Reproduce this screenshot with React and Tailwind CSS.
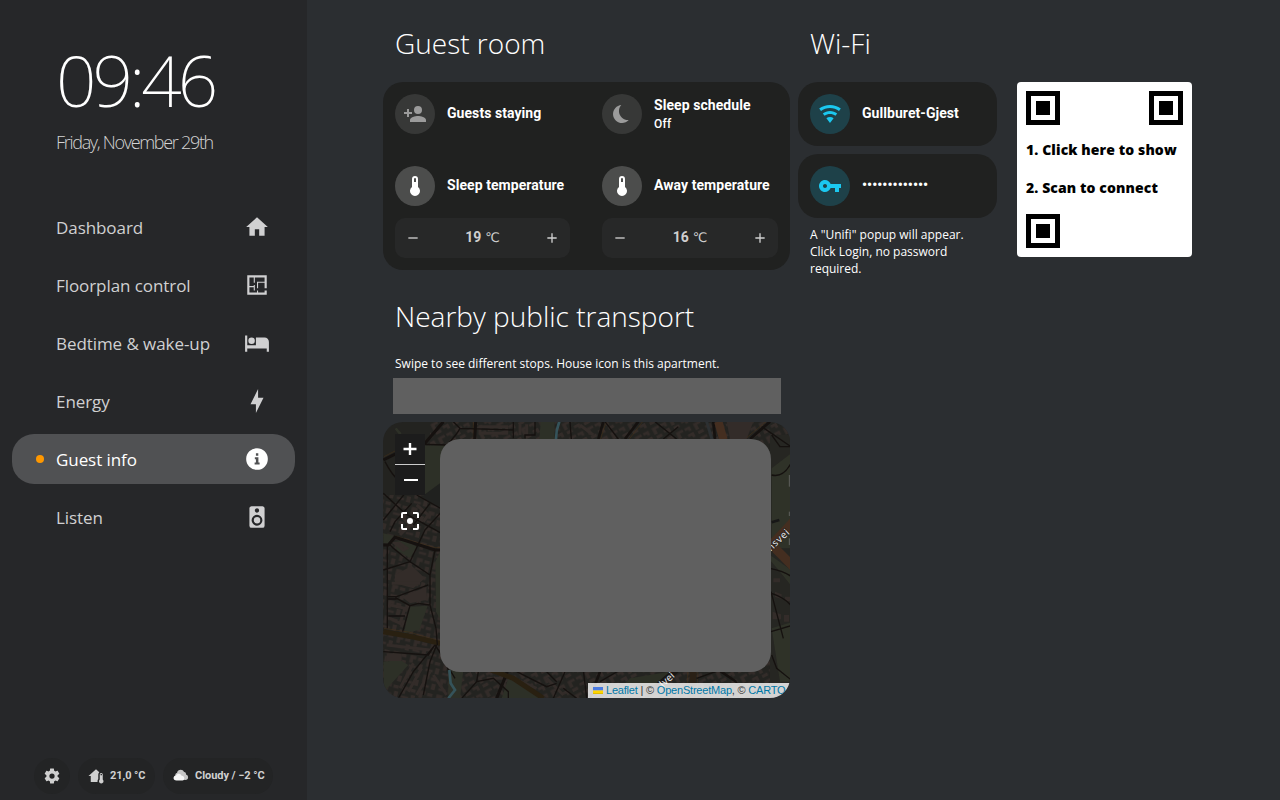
import React from "react";

const paths = {
  home: "M10,20V14H14V20H19V12H22L12,3L2,12H5V20H10Z",
  floor: "M10 5V10H9V5H5V13H9V12H10V17H9V14H5V19H12V17H13V19H19V17H21V21H3V3H21V15H19V10H13V15H12V9H19V5H10Z",
  bed: "M19,7H11V14H3V5H1V20H3V17H21V20H23V11A4,4 0 0,0 19,7M7,13A3,3 0 0,0 10,10A3,3 0 0,0 7,7A3,3 0 0,0 4,10A3,3 0 0,0 7,13Z",
  bolt: "M11 15H6L13 1V9H18L11 23V15Z",
  info: "M12 2A10 10 0 1 0 12 22A10 10 0 1 0 12 2ZM11 6.8H13.2V9H11ZM10 10.4H13.3V15.2H14.4V17H9.8V15.2H11V12.2H10Z",
  speaker: "M12,12A3,3 0 0,0 9,15A3,3 0 0,0 12,18A3,3 0 0,0 15,15A3,3 0 0,0 12,12M12,20A5,5 0 0,1 7,15A5,5 0 0,1 12,10A5,5 0 0,1 17,15A5,5 0 0,1 12,20M12,4A2,2 0 0,1 14,6A2,2 0 0,1 12,8C10.89,8 10,7.1 10,6C10,4.89 10.89,4 12,4M17,2H7C5.89,2 5,2.89 5,4V20A2,2 0 0,0 7,22H17A2,2 0 0,0 19,20V4C19,2.89 18.1,2 17,2Z",
  cog: "M12,15.5A3.5,3.5 0 0,1 8.5,12A3.5,3.5 0 0,1 12,8.5A3.5,3.5 0 0,1 15.5,12A3.5,3.5 0 0,1 12,15.5M19.43,12.97C19.47,12.65 19.5,12.33 19.5,12C19.5,11.67 19.47,11.34 19.43,11L21.54,9.37C21.73,9.22 21.78,8.95 21.66,8.73L19.66,5.27C19.54,5.05 19.27,4.96 19.05,5.05L16.56,6.05C16.04,5.66 15.5,5.32 14.87,5.07L14.5,2.42C14.46,2.18 14.25,2 14,2H10C9.75,2 9.54,2.18 9.5,2.42L9.13,5.07C8.5,5.32 7.96,5.66 7.44,6.05L4.95,5.05C4.73,4.96 4.46,5.05 4.34,5.27L2.34,8.73C2.21,8.95 2.27,9.22 2.46,9.37L4.57,11C4.53,11.34 4.5,11.67 4.5,12C4.5,12.33 4.53,12.65 4.57,12.97L2.46,14.63C2.27,14.78 2.21,15.05 2.34,15.27L4.34,18.73C4.46,18.95 4.73,19.03 4.95,18.95L7.44,17.94C7.96,18.34 8.5,18.68 9.13,18.93L9.5,21.58C9.54,21.82 9.75,22 10,22H14C14.25,22 14.46,21.82 14.5,21.58L14.87,18.93C15.5,18.67 16.04,18.34 16.56,17.94L19.05,18.95C19.27,19.03 19.54,18.95 19.66,18.73L21.66,15.27C21.78,15.05 21.73,14.78 21.54,14.63L19.43,12.97Z",
  guest: "M15,14C12.33,14 7,15.33 7,18V20H23V18C23,15.33 17.67,14 15,14M6,10V7H4V10H1V12H4V15H6V12H9V10M15,12A4,4 0 0,0 19,8A4,4 0 0,0 15,4A4,4 0 0,0 11,8A4,4 0 0,0 15,12Z",
  sleep: "M18.73,18C15.4,21.69 9.71,22 6,18.64C2.33,15.31 2.04,9.62 5.37,5.93C6.9,4.25 9,3.2 11.27,3C7.96,6.7 8.27,12.39 12,15.71C13.63,17.19 15.78,18 18,18C18.25,18 18.5,18 18.73,18Z",
  thermo: "M15 13V5A3 3 0 0 0 9 5V13A5 5 0 1 0 15 13M12 4A1 1 0 0 1 13 5V8H11V5A1 1 0 0 1 12 4Z",
  wifi: "M12,21L15.6,16.2C14.6,15.45 13.35,15 12,15C10.65,15 9.4,15.45 8.4,16.2L12,21M12,3C7.95,3 4.21,4.34 1.2,6.6L3,9C5.5,7.12 8.62,6 12,6C15.38,6 18.5,7.12 21,9L22.8,6.6C19.79,4.34 16.05,3 12,3M12,9C9.3,9 6.81,9.89 4.8,11.4L6.6,13.8C8.1,12.67 9.97,12 12,12C14.03,12 15.9,12.67 17.4,13.8L19.2,11.4C17.19,9.89 14.7,9 12,9Z",
  key: "M12.65 10C11.83 7.67 9.61 6 7 6c-3.31 0-6 2.69-6 6s2.69 6 6 6c2.61 0 4.83-1.67 5.65-4H17v4h4v-4h2v-4H12.65zM7 14c-1.1 0-2-.9-2-2s.9-2 2-2 2 .9 2 2-.9 2-2 2z",
  minus: "M19,13H5V11H19V13Z",
  plus: "M19,13H13V19H11V13H5V11H11V5H13V11H19V13Z",
  focus: "M12 9A3 3 0 1 0 12 15A3 3 0 1 0 12 9ZM19,19H15V21H19A2,2 0 0,0 21,19V15H19M19,3H15V5H19V9H21V5A2,2 0 0,0 19,3M5,5H9V3H5A2,2 0 0,0 3,5V9H5M5,15H3V19A2,2 0 0,0 5,21H9V19H5V15Z",
  homeThermo: "M19 8C20.11 8 21 8.9 21 10V16.76C21.61 17.31 22 18.11 22 19C22 20.66 20.66 22 19 22S16 20.66 16 19C16 18.11 16.39 17.31 17 16.76V10C17 8.9 17.9 8 19 8M19 9C18.45 9 18 9.45 18 10V11H20V10C20 9.45 19.55 9 19 9M12 3L16.4 6.96C15.54 7.69 15 8.78 15 10V16C14.37 16.83 14 17.87 14 19L14.1 20H5V12H2L12 3Z",
};

function Icon({ name, className }) {
  return (
    <svg viewBox="0 0 24 24" className={className} fill="currentColor" fillRule="evenodd" aria-hidden="true">
      <path d={paths[name]} />
    </svg>
  );
}

function NavItem({ icon, label, active }) {
  return (
    <a
      className={`flex h-[50px] items-center rounded-[22px] pr-[25px] pl-6 ${
        active ? "bg-[#505153] text-white" : "text-[#d0d0d1]"
      }`}
    >
      <span className={`h-2 w-2 rounded-full ${active ? "bg-[#ff9800]" : ""}`} />
      <span className="ml-3 flex-1 pt-px text-[17px] leading-6 tracking-[-0.07px]">{label}</span>
      <Icon name={icon} className="h-[26px] w-[26px]" />
    </a>
  );
}

function Entity({ icon, title, sub, iconClass }) {
  return (
    <div className="flex h-10 items-center gap-3">
      <span className={`flex h-10 w-10 shrink-0 items-center justify-center rounded-full ${iconClass}`}>
        <Icon name={icon} className="h-6 w-6" />
      </span>
      <span className={`flex flex-col font-['Roboto',sans-serif] text-white ${sub ? "" : "pb-[2px]"}`}>
        <span className="text-[14px] leading-[18px] font-bold tracking-[0.06px] whitespace-nowrap">{title}</span>
        {sub && <span className="pt-px text-[12px] leading-[18px] font-medium tracking-[0.2px]">{sub}</span>}
      </span>
    </div>
  );
}

function Stepper({ value }) {
  return (
    <div className="flex h-10 items-center justify-between rounded-[10px] bg-[#272828] px-[10px] text-[#cfcfcf]">
      <Icon name="minus" className="h-4 w-4" />
      <span className="flex items-baseline gap-[4px] pb-[2px] font-['Roboto',sans-serif] text-[14px] leading-5 font-bold">
        {value} <span className="font-['DejaVu_Sans',sans-serif] text-[13px] leading-5 font-normal">℃</span>
      </span>
      <Icon name="plus" className="h-4 w-4" />
    </div>
  );
}

function Heading({ children }) {
  return <h2 className="pl-3 text-[28px] leading-[40px] font-light text-white">{children}</h2>;
}

function Finder() {
  return (
    <span className="flex h-[34px] w-[34px] items-center justify-center border-[5px] border-black bg-white">
      <span className="h-[14px] w-[14px] bg-black" />
    </span>
  );
}

function MapArt() {
  return (
    <svg viewBox="0 0 407 276" className="block h-[276px] w-[407px]">
      <defs>
        <pattern id="blocks" width="58" height="46" patternUnits="userSpaceOnUse" patternTransform="rotate(-28)">
          <path d="M4 4h22v8h-12v14h-10zM32 5h18v14h-8v-6h-10zM6 31h18v9h-18zM33 26h19v15h-8v-7h-11z" fill="#332c29" />
        </pattern>
        <pattern id="blocksB" width="52" height="48" patternUnits="userSpaceOnUse" patternTransform="rotate(14)">
          <path d="M4 4h18v10h-8v12h-10zM28 6h16v10h-16zM5 32h22v8h-22zM34 24h12v18h-12z" fill="#332c29" />
        </pattern>
      </defs>
      <rect width="407" height="276" fill="#232320" />
      <g transform="translate(-3 -7) scale(.33333)">
        <path d="M150 0H1240V240H150z" fill="url(#blocks)" />
        <path d="M0 240H220V900H0z" fill="url(#blocksB)" />
        <path d="M210 700H1240V900H210z" fill="url(#blocks)" />
        <g fill="#2d3027">
          <path d="M125 92L205 90V205L140 238H130zM482 20H524V72H478zM50 38L65 55L58 60L44 42z" />
          <path d="M88 575L143 572L118 645L72 655zM166 440L185 400V620L168 590zM10 740L60 735L85 750L12 830zM205 765H250L240 850H205z" />
          <path d="M45 380L75 375L110 395L90 430L50 405zM385 790L440 800L480 850H365zM10 355L40 362L25 385H10z" />
        </g>
        <path d="M125 245L180 205V280L150 262z" fill="#20211f" />
        <g fill="#332c29">
          <path d="M45 480L95 452L135 490L100 520L45 505zM65 545L140 515L138 555L90 565z" />
          <path d="M20 715H65V738H20z" />
        </g>
        <g fill="none" stroke="#332c29" strokeWidth="9">
          <path d="M35 505L120 505M30 570L75 580L60 625L30 610M20 690L150 705" />
          <path d="M100 745L60 820M125 760L85 830M150 770L110 840M160 780L200 840M60 300L90 330L60 360M110 270L145 300L130 320M60 385L80 400L70 405L45 385Z" />
          <path d="M300 35H380V55H300ZM420 30V60M440 28V62M600 30L640 60M320 790H370M400 790L470 820M500 790L550 840" />
        </g>
        <g fill="none" stroke="#4b3217" strokeWidth="1.5">
          <path d="M12 125L45 108M135 80L190 22M12 640L90 652L180 678M45 363L165 398H185M330 770L400 795L490 845M280 20V72" />
        </g>
        <g fill="none" stroke="#15110f" strokeWidth="9">
          <path d="M10 135L50 115L135 85L190 20M287 20L284 72M10 390H25L45 367L165 405H185M382 770L350 850" />
        </g>
        <g fill="none" stroke="#292011" strokeWidth="15">
          <path d="M10 650L95 665L180 685M325 762L400 790L490 850" />
        </g>
        <g fill="none" stroke="#15110f" strokeWidth="4">
          <path d="M15 140Q35 180 60 200M10 235L75 295L185 355M110 240L185 282M75 235L10 315M95 265L45 320L30 350M185 290L135 345L90 440L40 400L25 385M150 265L100 330" />
          <path d="M22 390V640M10 465L90 440L150 480M165 405L150 480V570L168 640L172 690M50 545L145 510M22 545H48V552H22M50 550L90 572L115 565L148 570M90 572L68 650M25 603H75" />
          <path d="M10 710L145 720L165 690M165 690L100 770L55 850M170 690L150 740L130 840M165 690Q200 740 205 765M135 88L200 90Q230 60 240 40L220 20M240 40L400 45V70M465 20V60H435V70M400 20V45" />
          <path d="M210 765L225 790M295 770L290 800L245 850M290 800L340 790L385 830V850M410 770L500 815L530 805M555 770L520 850M550 820L590 850M500 770L530 800M570 20L574 72" />
        </g>
        <path d="M538 20Q528 45 528 72M208 765L212 805L225 825L205 850" fill="none" stroke="#35535a" strokeWidth="8" />
      </g>
      <g transform="translate(197 -7) scale(.33333)">
        <path d="M570 60H640V820H570z" fill="#262622" />
        <path d="M440 20H520L500 72H450z" fill="#332c29" />
        <path d="M575 160L640 110V400H575zM570 435L600 470L640 520V470L570 420zM575 640L640 620V800H600z" fill="#2f3228" />
        <path d="M150 790L300 765L240 810H130z" fill="#2c2f25" />
        <path d="M580 490h20v12h-20zM585 530l20 8v14l-20-6zM615 545h20v14h-20zM578 590l25 8v15h-25zM612 600h15v20h-15z" fill="#332c29" />
        <g fill="none" stroke="#4b3217" strokeWidth="1.5">
          <path d="M78 20L62 72M188 20L148 72M558 20L500 68M324 765L320 850M354 765L350 850" />
        </g>
        <g fill="none" stroke="#15110f" strokeWidth="8">
          <path d="M70 20L55 72M175 20L135 72M570 20L510 72M400 20L405 72M60 770L30 850" />
        </g>
        <path d="M340 765L335 850" stroke="#2a2015" strokeWidth="20" />
        <g fill="none" stroke="#15110f" strokeWidth="4">
          <path d="M75 20L115 72M225 20L290 72M295 35L250 72M545 35L640 100M575 60L600 95L640 95M575 180Q615 190 640 130M570 460Q620 470 640 490M575 535Q620 550 640 580M573 530L610 670M573 650L640 630M575 720L590 760L640 800" />
          <path d="M10 765L20 850M350 790L420 765L470 800M420 770L480 810M60 800L120 765" />
        </g>
        <path d="M415 20L435 90" stroke="#442e20" strokeWidth="25" fill="none" />
        <path d="M565 400L640 320M580 395L640 455" stroke="#442e20" strokeWidth="27" fill="none" />
        <path d="M380 20L398 80" stroke="#2c3032" strokeWidth="9" fill="none" />
        <path d="M200 840L290 765" stroke="#1a1613" strokeWidth="18" fill="none" />
        <path d="M575 322L598 315" stroke="#171717" strokeWidth="8" />
        <g fill="#d5d5d5" stroke="#181818" strokeWidth="3" paintOrder="stroke" fontFamily="Noto Sans, sans-serif" fontWeight="500" fontSize="30">
          <text transform="translate(572 410) rotate(-43)" letterSpacing="1.5">nsvei</text>
          <text transform="translate(425 74) rotate(78)" fontSize="28">S</text>
          <text transform="translate(250 818) rotate(-43)">lvei</text>
        </g>
        <path d="M628 180V215M628 290V303M628 370V390" stroke="#777" strokeWidth="2" />
      </g>
    </svg>
  );
}

export default function App() {
  return (
    <div className="flex h-[800px] w-[1280px] overflow-hidden bg-[#2b2e31] font-['Open_Sans',sans-serif] text-white">
      <aside className="flex h-full w-[307px] shrink-0 flex-col bg-[#262729] px-3">
        <div className="pt-[38px] pl-[44px]">
          <div className="h-[84px] font-['Noto_Sans',sans-serif] text-[71px] leading-[84px] font-extralight tracking-[-4px]">09:46</div>
          <div className="mt-[8px] text-[18px] leading-6 font-light tracking-[-1.3px] text-[#d4d4d4]">Friday, November 29th</div>
        </div>
        <nav className="mt-[48px] flex flex-col gap-2">
          <NavItem icon="home" label="Dashboard" />
          <NavItem icon="floor" label="Floorplan control" />
          <NavItem icon="bed" label="Bedtime & wake-up" />
          <NavItem icon="bolt" label="Energy" />
          <NavItem icon="info" label="Guest info" active />
          <NavItem icon="speaker" label="Listen" />
        </nav>
        <div className="mt-auto mb-[6px] ml-[22px] flex gap-2 font-['Roboto',sans-serif] text-[11px] font-bold tracking-[-0.05px] text-[#d0d0d0]">
          <div className="flex h-9 w-9 items-center justify-center rounded-full bg-[#232425]">
            <Icon name="cog" className="h-[18px] w-[18px]" />
          </div>
          <div className="flex h-9 w-[77px] items-center rounded-full bg-[#232425] pl-[9px]">
            <Icon name="homeThermo" className="mr-[5px] h-[18px] w-[18px]" />
            <span className="whitespace-nowrap">21,0 °C</span>
          </div>
          <div className="flex h-9 w-[110px] items-center rounded-full bg-[#232425] pl-[9px]">
            <svg viewBox="0 0 18 18" className="mr-[5px] h-[18px] w-[18px]">
              <path d="M4 12C2.5 8 3.5 6 5 6C5.5 2.2 10.8 1.5 12 5C14 5 14 6.5 14 7.5C16.8 8 17 13 13.5 13Z" fill="#c6c6c6" />
              <path d="M4.5 13.5C.5 13.5 .8 8.8 4 8.6C5 6 9 6.2 9.6 8.8C12.5 8.3 13.5 13.5 10.5 13.5Z" fill="#f6f6f6" />
            </svg>
            <span className="whitespace-nowrap">Cloudy / −2 °C</span>
          </div>
        </div>
      </aside>

      <main className="flex items-start gap-2 pt-[23px] pl-[76px]">
        <section className="flex w-[407px] flex-col">
          <Heading>Guest room</Heading>
          <div className="mt-[19px] grid h-[188px] grid-cols-[175px_176px] grid-rows-[40px_40px_40px] gap-x-8 rounded-[20px] bg-[#202120] p-3">
            <Entity icon="guest" title="Guests staying" iconClass="bg-[#373837] text-[#9b9b9b]" />
            <Entity icon="sleep" title="Sleep schedule" sub="Off" iconClass="bg-[#373837] text-[#9b9b9b]" />
            <div className="mt-8">
              <Entity icon="thermo" title="Sleep temperature" iconClass="bg-[#4c4d4c] text-white" />
            </div>
            <div className="mt-8">
              <Entity icon="thermo" title="Away temperature" iconClass="bg-[#4c4d4c] text-white" />
            </div>
            <div className="mt-11">
              <Stepper value="19" />
            </div>
            <div className="mt-11">
              <Stepper value="16" />
            </div>
          </div>

          <div className="mt-[26px]">
            <Heading>Nearby public transport</Heading>
          </div>
          <p className="mt-[20px] pl-3 text-[12px] leading-4">Swipe to see different stops. House icon is this apartment.</p>
          <div className="mt-[6px] ml-[10px] h-9 w-[388px] bg-[#606060]" />
          <div className="relative mt-2 h-[276px] w-[407px] overflow-hidden rounded-[20px]">
            <MapArt />
            <div className="absolute top-[17px] left-[57px] h-[233px] w-[331px] rounded-[20px] bg-[#606060]" />
            <div className="absolute top-3 left-3 flex w-[30px] flex-col bg-[#1c1c1c]">
              <div className="flex h-[31px] items-center justify-center border-b border-[#ccc]">
                <svg viewBox="0 0 14 14" className="h-[14px] w-[14px]">
                  <path d="M7 1V13M0.5 7H13.5" stroke="#fff" strokeWidth="2.4" />
                </svg>
              </div>
              <div className="flex h-[30px] items-center justify-center">
                <span className="ml-[2px] h-[2px] w-[14px] bg-white" />
              </div>
            </div>
            <Icon name="focus" className="absolute top-[87px] left-[15px] h-6 w-6" />
            <div className="absolute right-0 bottom-0 flex h-[15px] w-[202px] items-center bg-white/80 pl-[5px] font-['Liberation_Sans',sans-serif] text-[11px] whitespace-nowrap text-[#333]">
              <svg viewBox="0 0 10 7" className="mr-[3px] h-[7px] w-[10px] shrink-0">
                <path d="M0 0H10V3.5H0z" fill="#4c7be1" />
                <path d="M0 3.5H10V6H0z" fill="#ffd500" />
                <path d="M0 6H10V7H0z" fill="#e0bc00" />
              </svg>
              <span className="tracking-[-0.2px]">
                <a className="text-[#0078a8]">Leaflet</a> | © <a className="text-[#0078a8]">OpenStreetMap</a>, © <a className="text-[#0078a8]">CARTO</a>
              </span>
            </div>
          </div>
        </section>

        <section className="flex w-[407px] flex-col">
          <Heading>Wi-Fi</Heading>
          <div className="mt-[19px] flex gap-5">
            <div className="flex w-[199px] flex-col gap-2">
              <div className="rounded-[20px] bg-[#202120] p-3">
                <Entity icon="wifi" title="Gullburet-Gjest" iconClass="bg-[#1e4149] text-[#1bc8f0]" />
              </div>
              <div className="rounded-[20px] bg-[#202120] p-3">
                <Entity icon="key" title="•••••••••••••" iconClass="bg-[#1e4149] text-[#1bc8f0]" />
              </div>
              <p className="w-[180px] pl-3 text-[12px] leading-[17px]">A "Unifi" popup will appear. Click Login, no password required.</p>
            </div>
            <div className="flex h-[175px] w-[175px] flex-col justify-between rounded-[4px] bg-white p-[9px] text-black">
              <div className="flex justify-between">
                <Finder />
                <Finder />
              </div>
              <div className="flex flex-col gap-[18px] pb-px text-[14px] leading-5 font-extrabold tracking-[0.1px] whitespace-nowrap">
                <span>1. Click here to show</span>
                <span>2. Scan to connect</span>
              </div>
              <Finder />
            </div>
          </div>
        </section>
      </main>
    </div>
  );
}
